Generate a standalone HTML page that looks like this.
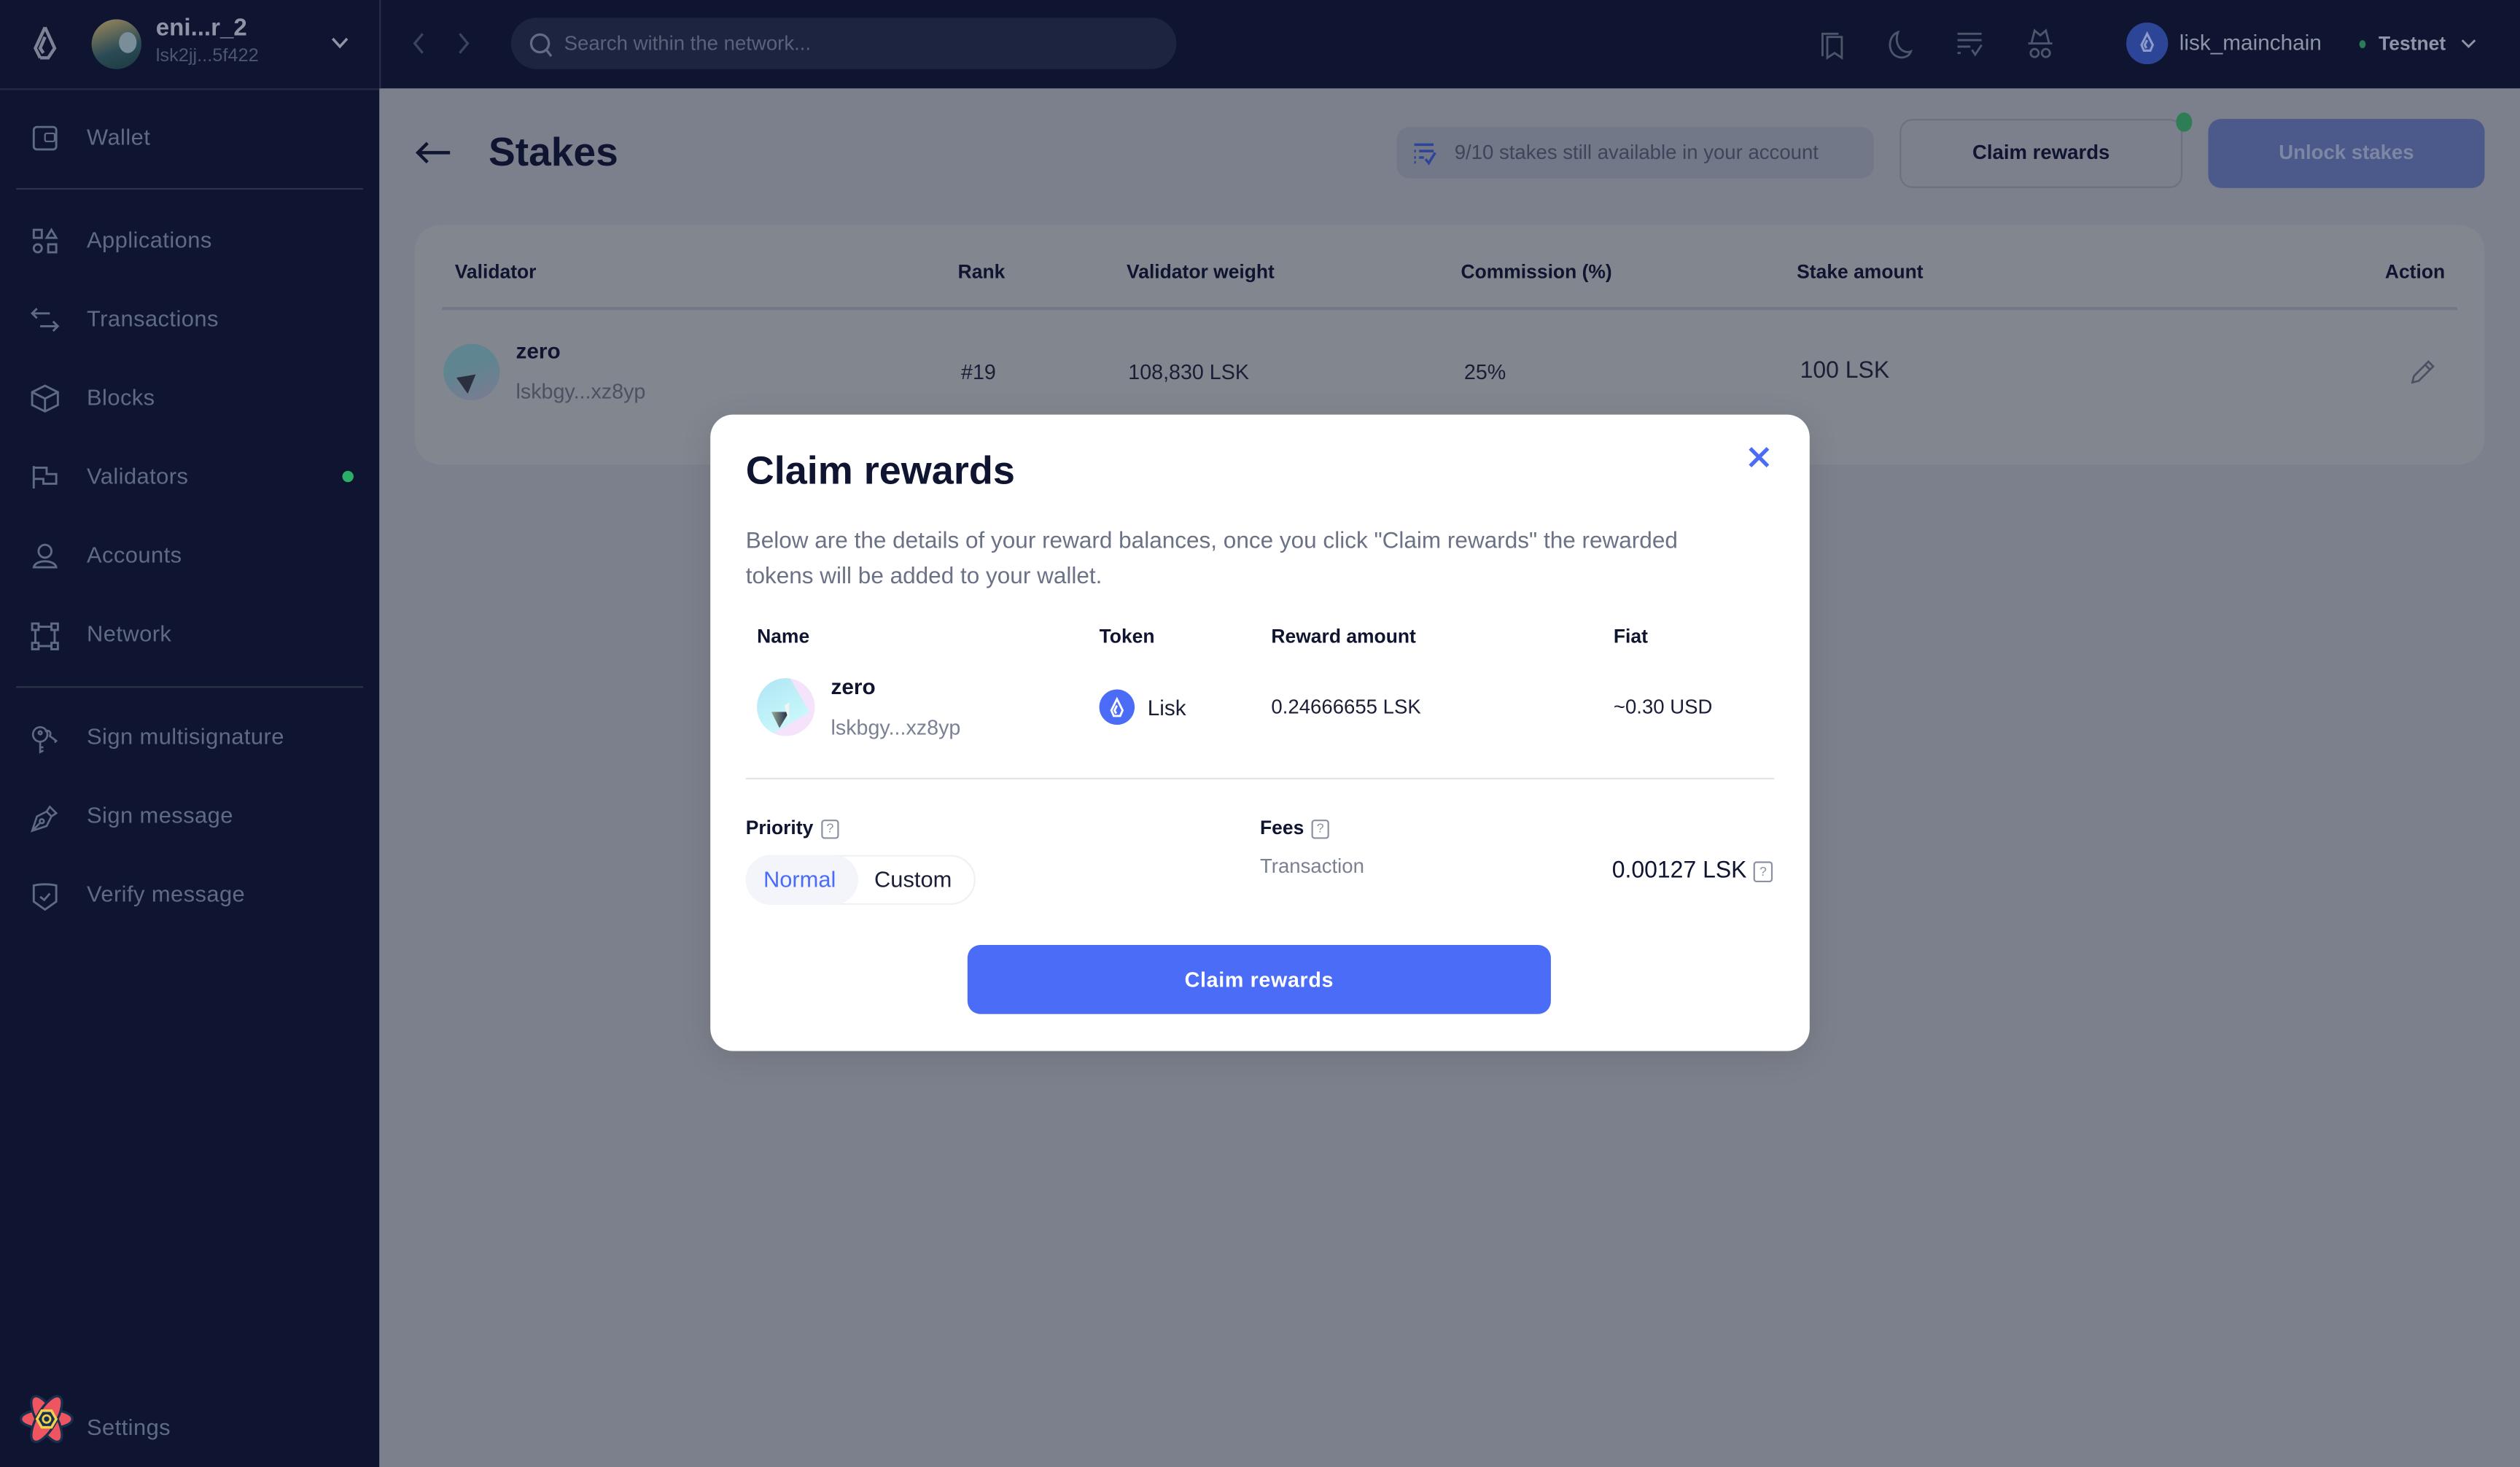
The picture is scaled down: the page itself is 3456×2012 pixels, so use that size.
<!DOCTYPE html>
<html><head><meta charset="utf-8"><style>
*{margin:0;padding:0;box-sizing:border-box}
html,body{width:3456px;height:2011px;overflow:hidden;background:#7b808c}
#s{position:absolute;left:0;top:0;width:1568px;height:913px;transform:scale(2.20408);transform-origin:0 0;font-family:"Liberation Sans",sans-serif;background:#7b808c}
.a{position:absolute;white-space:nowrap}
.nav{color:#5f6b85;font-size:14px;letter-spacing:.2px}
.th{font-size:12px;font-weight:bold;color:#0f1530}
.td{font-size:13px;color:#1a1f36}
svg{position:absolute;overflow:visible}
</style></head><body><div id="s">
<div class="a" style="left:0;top:0;width:236px;height:913px;background:#0f1530"></div>
<div class="a" style="left:236px;top:0;width:1332px;height:55px;background:#0f1530"></div>
<div class="a" style="left:0;top:55px;width:236px;height:1px;background:#262c44"></div>
<div class="a" style="left:236px;top:0;width:1px;height:55px;background:#262c44"></div>
<svg style="left:20px;top:16px" width="16" height="22" viewBox="0 0 16 22"><path d="M8 1 L2 14 L5 20 M8 1 L14 14 L10 20 L5 20 M8 7 L5 14 L7 17" fill="none" stroke="#7c8396" stroke-width="2"/></svg>
<div class="a" style="left:57px;top:12px;width:31px;height:31px;border-radius:50%;background:linear-gradient(160deg,#a08a5c 0%,#2a4a55 60%,#1c3a40 100%);overflow:hidden"><div style="position:absolute;left:17px;top:8px;width:11px;height:13px;border-radius:50%;background:#7a8e9a"></div></div>
<div class="a" style="left:97px;top:9px;font-size:15px;color:#8e95a6;font-weight:bold">eni...r_2</div>
<div class="a" style="left:97px;top:29px;font-size:11.5px;color:#4e566c">lsk2jj...5f422</div>
<svg style="left:206px;top:23px" width="11" height="7"><path d="M1 1 L5.5 6 L10 1" fill="none" stroke="#8e95a6" stroke-width="1.6"/></svg>

<svg style="left:20px;top:78px" width="16" height="16"><rect x="1" y="1" width="14" height="14" rx="2" fill="none" stroke="#5f6b85" stroke-width="1.3"/><rect x="8" y="5" width="6" height="5" rx="1" fill="none" stroke="#5f6b85"/></svg>
<div class="a nav" style="left:54px;top:77px">Wallet</div>
<div class="a" style="left:10px;top:117px;width:216px;height:1px;background:#2c3348"></div>
<svg style="left:20px;top:142px" width="16" height="16" fill="none" stroke="#5f6b85" stroke-width="1.3"><rect x="1" y="1" width="5" height="5"/><path d="M12 1 L15 6 L9 6Z"/><circle cx="3.5" cy="12.5" r="2.5"/><rect x="10" y="10" width="5" height="5"/></svg>
<div class="a nav" style="left:54px;top:141px">Applications</div>
<svg style="left:19px;top:191px" width="18" height="16" fill="none" stroke="#5f6b85" stroke-width="1.3"><path d="M1 4 H12 M4 1 L1 4 L4 7 M6 12 H17 M14 9 L17 12 L14 15"/></svg>
<div class="a nav" style="left:54px;top:190px">Transactions</div>
<svg style="left:19px;top:239px" width="18" height="18" fill="none" stroke="#5f6b85" stroke-width="1.3"><path d="M9 1 L17 5 L17 13 L9 17 L1 13 L1 5Z M1 5 L9 9 L17 5 M9 9 V17"/></svg>
<div class="a nav" style="left:54px;top:239px">Blocks</div>
<svg style="left:19px;top:289px" width="18" height="16" fill="none" stroke="#5f6b85" stroke-width="1.3"><path d="M2 1 V15 M2 2 H10 V6 H16 V12 H8 V9 H2"/></svg>
<div class="a nav" style="left:54px;top:288px">Validators</div>
<div class="a" style="left:213px;top:293px;width:7px;height:7px;border-radius:50%;background:#2bae66"></div>
<svg style="left:20px;top:338px" width="16" height="16" fill="none" stroke="#5f6b85" stroke-width="1.3"><circle cx="8" cy="5" r="4"/><path d="M1 15 C2 10 14 10 15 15Z"/></svg>
<div class="a nav" style="left:54px;top:337px">Accounts</div>
<svg style="left:19px;top:387px" width="18" height="18" fill="none" stroke="#5f6b85" stroke-width="1.3"><rect x="1" y="1" width="4" height="4"/><rect x="13" y="1" width="4" height="4"/><rect x="1" y="13" width="4" height="4"/><rect x="13" y="13" width="4" height="4"/><path d="M5 3 H13 M3 5 V13 M15 5 V13 M5 15 H13"/></svg>
<div class="a nav" style="left:54px;top:386px">Network</div>
<div class="a" style="left:10px;top:427px;width:216px;height:1px;background:#2c3348"></div>
<svg style="left:19px;top:451px" width="18" height="18" fill="none" stroke="#5f6b85" stroke-width="1.2"><circle cx="6" cy="6" r="4.5"/><circle cx="6" cy="5" r="1"/><path d="M6 10 V17 L8 16 M6 14 H8 M9 4 C12 3 13 5 12 7 L16 10 L15 11"/></svg>
<div class="a nav" style="left:54px;top:450px">Sign multisignature</div>
<svg style="left:19px;top:500px" width="18" height="18" fill="none" stroke="#5f6b85" stroke-width="1.2"><path d="M1 17 L4 8 L10 5 L13 8 L10 14Z M1 17 L6 12 M12 2 L16 6 L13 8 L10 5Z"/><circle cx="7" cy="11" r="1.3"/></svg>
<div class="a nav" style="left:54px;top:499px">Sign message</div>
<svg style="left:20px;top:549px" width="16" height="18" fill="none" stroke="#5f6b85" stroke-width="1.3"><path d="M1 2 C5 1 11 1 15 2 V12 L8 17 L1 12Z M5 9 L7.5 11 L11 7"/></svg>
<div class="a nav" style="left:54px;top:548px">Verify message</div>
<svg style="left:11px;top:866px" width="36" height="34" viewBox="-18 -17 36 34"><g fill="#ef5561" stroke="#173050" stroke-width="1.5"><ellipse rx="16" ry="6"/><ellipse rx="16" ry="6" transform="rotate(60)"/><ellipse rx="16" ry="6" transform="rotate(-60)"/></g><polygon points="-6,0 -3,-5.2 3,-5.2 6,0 3,5.2 -3,5.2" fill="#173050" stroke="#f1d04b" stroke-width="1.6"/><circle r="2.3" fill="none" stroke="#f1d04b" stroke-width="1.3"/></svg>
<div class="a nav" style="left:54px;top:880px">Settings</div>

<svg style="left:256px;top:20px" width="40" height="14" fill="none" stroke="#3c445c" stroke-width="1.5"><path d="M7 1 L2 7 L7 13 M30 1 L35 7 L30 13"/></svg>
<div class="a" style="left:318px;top:11px;width:414px;height:32px;border-radius:16px;background:#1d2440"></div>
<svg style="left:329px;top:20px" width="16" height="16" fill="none" stroke="#626b82" stroke-width="1.5"><circle cx="7" cy="7" r="5.5"/><path d="M11 11 L14 15"/></svg>
<div class="a" style="left:351px;top:20px;font-size:12.5px;color:#5a6378">Search within the network...</div>
<svg style="left:1131px;top:19px" width="16" height="18" fill="none" stroke="#4d556b" stroke-width="1.3"><path d="M3 16 V2 H13 M6 4 H15 V17 L10.5 14 L6 17Z"/></svg>
<svg style="left:1173px;top:19px" width="17" height="18" fill="none" stroke="#4d556b" stroke-width="1.3"><path d="M8 1 C2 3 1 13 7 16 C11 18 15 16 16 13 C11 15 5 9 8 1Z"/></svg>
<svg style="left:1217px;top:20px" width="18" height="16" fill="none" stroke="#4d556b" stroke-width="1.3"><path d="M1 1 H16 M1 5 H16 M1 9 H9 M1 13 H3 M10 11 L12 14 L16 8"/></svg>
<svg style="left:1261px;top:18px" width="17" height="19" fill="none" stroke="#4d556b" stroke-width="1.3"><path d="M3 9 L5 1 L8.5 4 L12 1 L14 9 H1 H16"/><circle cx="5" cy="15" r="2.5"/><circle cx="12" cy="15" r="2.5"/></svg>
<div class="a" style="left:1323px;top:14px;width:26px;height:26px;border-radius:50%;background:#2d4597"></div>
<svg style="left:1331px;top:20px" width="10" height="14"><path d="M5 1 L1.5 8 L3 11.5 L7 11.5 L8.5 8Z M5 5 L3.5 8 L4.5 10" fill="none" stroke="#8d9bc9" stroke-width="1.4"/></svg>
<div class="a" style="left:1356px;top:19px;font-size:13.5px;color:#8e95a6">lisk_mainchain</div>
<div class="a" style="left:1468px;top:25px;width:4px;height:5px;border-radius:50%;background:#2b7a5a"></div>
<div class="a" style="left:1480px;top:20px;font-size:12px;font-weight:bold;color:#8e95a6">Testnet</div>
<svg style="left:1531px;top:24px" width="10" height="7"><path d="M1 1 L5 5 L9 1" fill="none" stroke="#8e95a6" stroke-width="1.3"/></svg>

<svg style="left:258px;top:87px" width="24" height="16" fill="none" stroke="#0f1530" stroke-width="2"><path d="M22 8 H2 M8 2 L2 8 L8 14"/></svg>
<div class="a" style="left:304px;top:81px;font-size:25px;font-weight:bold;color:#0f1530">Stakes</div>
<div class="a" style="left:869px;top:79px;width:297px;height:32px;border-radius:8px;background:#737889"></div>
<svg style="left:879px;top:88px" width="15" height="15" fill="none" stroke="#2c4597" stroke-width="1.6"><path d="M1 2 H13 M4 6 H13 M4 10 H7 M1 6 H2 M1 10 H2 M1 13 H2 M8 11 L10 13.5 L14 7"/></svg>
<div class="a" style="left:905px;top:88px;font-size:12.5px;color:#3e4459">9/10 stakes still available in your account</div>
<div class="a" style="left:1182px;top:74px;width:176px;height:43px;border-radius:8px;border:1px solid #6c7180"></div>
<div class="a" style="left:1182px;top:88px;width:176px;text-align:center;font-size:12.5px;font-weight:bold;color:#0f1530">Claim rewards</div>
<div class="a" style="left:1354px;top:70px;width:10px;height:12px;border-radius:50%;background:#2e7d55"></div>
<div class="a" style="left:1374px;top:74px;width:172px;height:43px;border-radius:8px;background:#4c5a8b"></div>
<div class="a" style="left:1374px;top:88px;width:172px;text-align:center;font-size:12.5px;font-weight:bold;color:#7d86a3">Unlock stakes</div>

<div class="a" style="left:258px;top:140px;width:1288px;height:149px;border-radius:16px;background:#82868f"></div>
<div class="a th" style="left:283px;top:162px">Validator</div>
<div class="a th" style="left:596px;top:162px">Rank</div>
<div class="a th" style="left:701px;top:162px">Validator weight</div>
<div class="a th" style="left:909px;top:162px">Commission (%)</div>
<div class="a th" style="left:1118px;top:162px">Stake amount</div>
<div class="a th" style="left:1484px;top:162px">Action</div>
<div class="a" style="left:275px;top:191px;width:1254px;height:2px;background:#737887"></div>
<div class="a" style="left:276px;top:214px;width:35px;height:35px;border-radius:50%;background:linear-gradient(160deg,#5f8590 40%,#7c7a92 100%)"></div>
<svg style="left:284px;top:233px" width="14" height="14"><path d="M0 2 L12 0 L7 12Z" fill="#2a3040"/></svg>
<div class="a td" style="left:321px;top:211px;font-size:13.5px;font-weight:bold;color:#0f1530">zero</div>
<div class="a td" style="left:321px;top:236px;color:#4b5163">lskbgy...xz8yp</div>
<div class="a td" style="left:598px;top:224px">#19</div>
<div class="a td" style="left:702px;top:224px">108,830 LSK</div>
<div class="a td" style="left:911px;top:224px">25%</div>
<div class="a td" style="left:1120px;top:223px;font-size:14.5px">100 LSK</div>
<svg style="left:1500px;top:224px" width="15" height="15" fill="none" stroke="#4b5163" stroke-width="1.2"><path d="M1 14 L2 10 L11 1 L14 4 L5 13Z M9 3 L12 6"/></svg>

<div class="a" style="left:442px;top:258px;width:684px;height:396px;border-radius:14px;background:#fff;box-shadow:0 4px 20px rgba(0,0,0,.1)"></div>
<div class="a" style="left:464px;top:280px;font-size:24.5px;font-weight:bold;color:#0f1530">Claim rewards</div>
<svg style="left:1088px;top:278px" width="13" height="13" fill="none" stroke="#4a6cf7" stroke-width="2.4"><path d="M1 1 L12 12 M12 1 L1 12"/></svg>
<div class="a" style="left:464px;top:326px;font-size:14.3px;line-height:22px;color:#6b7285;white-space:normal;width:625px">Below are the details of your reward balances, once you click "Claim rewards" the rewarded tokens will be added to your wallet.</div>
<div class="a th" style="left:471px;top:389px">Name</div>
<div class="a th" style="left:684px;top:389px">Token</div>
<div class="a th" style="left:791px;top:389px">Reward amount</div>
<div class="a th" style="left:1004px;top:389px">Fiat</div>
<div class="a" style="left:471px;top:422px;width:36px;height:36px;border-radius:50%;background:#f5e3fb;overflow:hidden"><div style="position:absolute;left:-8px;top:-4px;width:34px;height:36px;background:linear-gradient(180deg,#ade4f3,#c8f7fb);transform:rotate(-30deg)"></div></div>
<svg style="left:479px;top:441px" width="16" height="16"><defs><linearGradient id="g" x1="0" x2="1"><stop offset="0" stop-color="#9aa89a"/><stop offset="1" stop-color="#1c2240"/></linearGradient></defs><path d="M1 2 L12 2 L6 12Z" fill="url(#g)"/><path d="M9 -2 L12 -4 L12 8Z" fill="#f0f4f4"/></svg>
<div class="a" style="left:517px;top:420px;font-size:13.5px;font-weight:bold;color:#0f1530">zero</div>
<div class="a td" style="left:517px;top:445px;color:#7a8193">lskbgy...xz8yp</div>
<div class="a" style="left:684px;top:429px;width:22px;height:22px;border-radius:50%;background:#4a6cf7"></div>
<svg style="left:690px;top:434px" width="10" height="13"><path d="M5 1 L1.5 8 L3 11.5 L7 11.5 L8.5 8Z M5 5 L3.5 8 L4.5 10" fill="none" stroke="#fff" stroke-width="1.3"/></svg>
<div class="a td" style="left:714px;top:433px;font-size:13.5px">Lisk</div>
<div class="a td" style="left:791px;top:433px;font-size:12.5px">0.24666655 LSK</div>
<div class="a td" style="left:1004px;top:433px;font-size:12.5px">~0.30 USD</div>
<div class="a" style="left:464px;top:484px;width:640px;height:1px;background:#e1e3e8"></div>
<div class="a th" style="left:464px;top:508px">Priority</div>
<div class="a" style="left:511px;top:510px;width:11px;height:12px;border:1px solid #8b91a0;border-radius:2px;font-size:8px;color:#8b91a0;text-align:center;line-height:10px">?</div>
<div class="a th" style="left:784px;top:508px">Fees</div>
<div class="a" style="left:816px;top:510px;width:11px;height:12px;border:1px solid #8b91a0;border-radius:2px;font-size:8px;color:#8b91a0;text-align:center;line-height:10px">?</div>
<div class="a" style="left:464px;top:532px;width:143px;height:31px;border-radius:16px;border:1px solid #eef0f4"></div>
<div class="a" style="left:464px;top:532px;width:70px;height:31px;border-radius:16px;background:#f3f5fb"></div>
<div class="a" style="left:475px;top:539px;font-size:14px;color:#4a6cf7">Normal</div>
<div class="a" style="left:544px;top:539px;font-size:14px;color:#1a1f36">Custom</div>
<div class="a" style="left:784px;top:532px;font-size:12.5px;color:#7a8193">Transaction</div>
<div class="a" style="left:1003px;top:534px;font-size:14.5px;color:#0f1530">0.00127 LSK</div>
<div class="a" style="left:1091px;top:536px;width:12px;height:13px;border:1px solid #8b91a0;border-radius:2px;font-size:8px;color:#8b91a0;text-align:center;line-height:11px">?</div>
<div class="a" style="left:602px;top:588px;width:363px;height:43px;border-radius:8px;background:#4a6cf7"></div>
<div class="a" style="left:602px;top:602px;width:363px;text-align:center;font-size:13px;font-weight:bold;color:#fff;letter-spacing:.3px">Claim rewards</div>
</div></body></html>
